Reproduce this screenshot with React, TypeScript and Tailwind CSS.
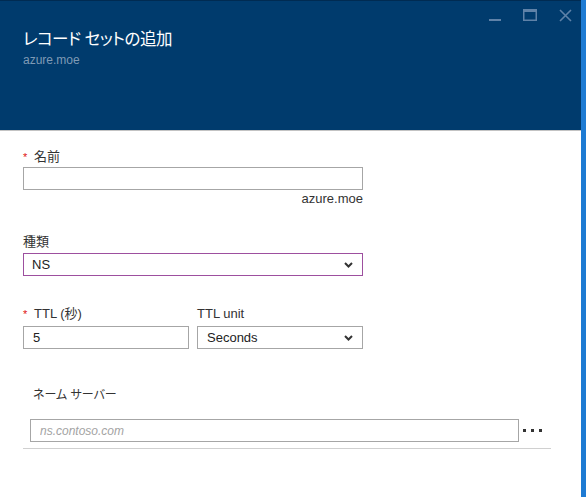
import React from "react";

const font = "font-['Liberation_Sans','Noto_Sans_CJK_JP',sans-serif] [font-feature-settings:'palt']";

function Chevron() {
  return (
    <svg width="9" height="6" viewBox="0 0 9 6" className="shrink-0">
      <path d="M1 1 L4.5 4.5 L8 1" fill="none" stroke="#333" strokeWidth="2" />
    </svg>
  );
}

function WindowControls() {
  return (
    <svg width="90" height="16" viewBox="0 0 90 16" className="mt-[6px] mr-[5px] shrink-0">
      <rect x="3" y="12" width="12" height="2" fill="#5f82a8" />
      <rect x="37.75" y="2.75" width="12.5" height="10.5" fill="none" stroke="#5f82a8" strokeWidth="1.5" />
      <rect x="37" y="2" width="14" height="3" fill="#5f82a8" />
      <path d="M74 3 L85 14 M85 3 L74 14" stroke="#5f82a8" strokeWidth="1.6" />
    </svg>
  );
}

function Label({ text, required }: { text: string; required?: boolean }) {
  return (
    <div className="flex items-start h-4 leading-4 text-[13px] text-[#333]">
      {required && <span className="text-[#e01010] text-[11px] leading-4 w-[11px]">*</span>}
      <span>{text}</span>
    </div>
  );
}

export default function App() {
  return (
    <div className={`w-[586px] h-[497px] flex bg-white overflow-hidden ${font}`}>
      <div className="w-[581px] flex flex-col">
        <div className="h-[131px] bg-[#003b6d] border-t border-t-[#002b52] border-b border-b-[#c3c3c3] flex justify-between">
          <div className="pl-[23px] pt-[26px]">
            <h1 className="text-[16.5px] tracking-[-0.5px] leading-6 text-white">レコード セットの追加</h1>
            <div className="text-[12px] leading-4 text-[#7f9ab5] mt-[1px]">azure.moe</div>
          </div>
          <WindowControls />
        </div>

        <div className="pl-[23px] pt-[18px] flex flex-col">
          <Label text="名前" required />
          <input className="mt-[2px] w-[340px] h-[23px] border border-[#a6a6a6] outline-none px-[8px] text-[13px]" />
          <div className="w-[340px] mt-[1px] text-right text-[13px] leading-4 text-[#333]">azure.moe</div>

          <div className="mt-[27px]">
            <Label text="種類" />
          </div>
          <div className="mt-[3px] w-[340px] h-[23px] border border-[#9d4f9f] flex items-center justify-between pl-[8px] pr-[9px] text-[13px] text-[#222]">
            <span>NS</span>
            <Chevron />
          </div>

          <div className="mt-[30px] flex gap-[8px]">
            <div className="w-[166px]">
              <Label text="TTL (秒)" required />
            </div>
            <div className="w-[166px]">
              <Label text="TTL unit" />
            </div>
          </div>
          <div className="mt-[4px] flex gap-[8px]">
            <input
              defaultValue="5"
              className="w-[166px] h-[23px] border border-[#a6a6a6] outline-none px-[9px] text-[13px] text-[#222]"
            />
            <div className="w-[166px] h-[23px] border border-[#a6a6a6] flex items-center justify-between pl-[9px] pr-[9px] text-[13px] text-[#222]">
              <span>Seconds</span>
              <Chevron />
            </div>
          </div>

          <div className="mt-[38px] ml-[10px] h-4 leading-4 text-[12px] text-[#333]">ネーム サーバー</div>
          <div className="mt-[16px] ml-[7px] flex items-center">
            <input
              placeholder="ns.contoso.com"
              className="w-[489px] h-[23px] border border-[#a6a6a6] outline-none px-[9px] text-[12px] italic placeholder:text-[#a3a3a3]"
            />
            <div className="ml-[4px] flex gap-[5px]">
              <span className="w-[3px] h-[3px] bg-[#333]" />
              <span className="w-[3px] h-[3px] bg-[#333]" />
              <span className="w-[3px] h-[3px] bg-[#333]" />
            </div>
          </div>
          <div className="mt-[6px] w-[528px] border-t border-t-[#d0d0d0]" />
        </div>
      </div>
      <div className="w-[5px] bg-[#1e7bd3]" />
    </div>
  );
}
